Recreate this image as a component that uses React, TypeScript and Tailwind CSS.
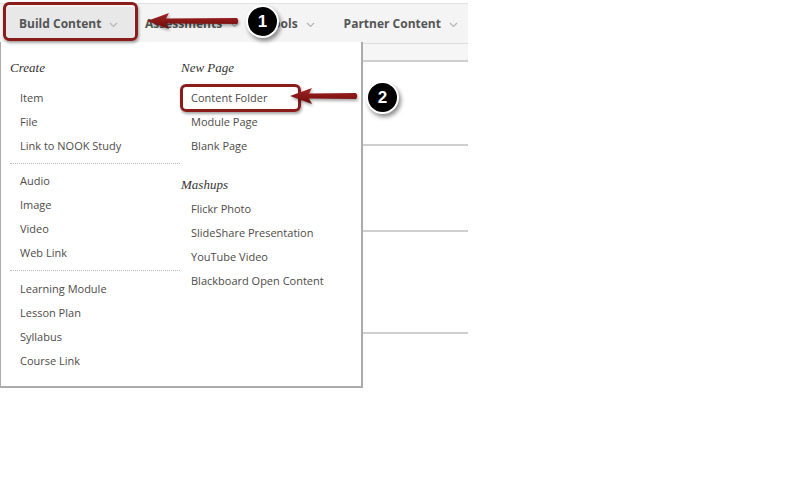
import React from 'react';

const sans = { fontFamily: '"Open Sans", "Liberation Sans", sans-serif' };

const Chevron: React.FC = () => (
  <svg width="9" height="6" viewBox="0 0 9 6" className="ml-2 mt-[2px]">
    <path d="M1 1 L4.5 4.5 L8 1" fill="none" stroke="#b5b5b5" strokeWidth="1.2" />
  </svg>
);

const Item: React.FC<{ label: string }> = ({ label }) => (
  <div className="h-6 flex items-center text-[11px] text-[#4e4b48] pl-[10px]">{label}</div>
);

const Heading: React.FC<{ label: string; className?: string }> = ({ label, className }) => (
  <div
    className={`h-5 flex items-center text-[13px] italic text-[#333] ${className ?? ''}`}
    style={{ fontFamily: '"Liberation Serif", "DejaVu Serif", serif' }}
  >
    {label}
  </div>
);

const Sep: React.FC<{ className?: string }> = ({ className }) => (
  <div className={`mt-[5px] border-t border-dotted border-[#bdbdbd] ${className ?? 'mb-[5px]'}`} />
);

const Badge: React.FC<{ n: string; className: string }> = ({ n, className }) => (
  <div
    className={`absolute w-[33px] h-[33px] rounded-full bg-black border-2 border-white flex items-center justify-center text-white text-[17px] font-bold shadow-[2px_3px_4px_rgba(0,0,0,0.45)] ${className}`}
    style={{ fontFamily: '"Liberation Sans", sans-serif' }}
  >
    {n}
  </div>
);

const Arrow: React.FC<{ className: string; len: number }> = ({ className, len }) => (
  <svg className={`absolute ${className}`} width={len + 4} height="22" viewBox={`0 0 ${len + 4} 22`}>
    <defs>
      <linearGradient id={`g${len}`} x1="0" y1="0" x2="0" y2="1">
        <stop offset="0" stopColor="#a32424" />
        <stop offset="1" stopColor="#6e0c0c" />
      </linearGradient>
    </defs>
    <g style={{ filter: 'drop-shadow(1px 2px 1.5px rgba(0,0,0,0.35))' }}>
      <path
        d={`M1 10 L23 2 L20 7.5 L${len - 2} 7 Q${len + 0.5} 10 ${len - 2} 13 L20 12.5 L23 18 Z`}
        fill={`url(#g${len})`}
      />
    </g>
  </svg>
);

const App: React.FC = () => {
  return (
    <div className="relative w-[798px] h-[485px] bg-white overflow-hidden" style={sans}>
      {/* page behind the menu */}
      <div className="w-[468px]">
        <div className="h-[3px] bg-white" />
        <div className="h-[40px] bg-[#f4f4f4] border-t border-[#e2e2e2] flex items-center text-[12px] font-bold text-[#555]">
          <div className="ml-[6px] w-[128px] h-[34px] bg-[#e8e8e8] flex items-center pl-[13px]">
            Build Content
            <Chevron />
          </div>
          <div className="ml-[11px] flex items-center">
            Assessments
            <Chevron />
          </div>
          <div className="ml-[27px] flex items-center">
            Tools
            <Chevron />
          </div>
          <div className="ml-[29px] flex items-center">
            Partner Content
            <Chevron />
          </div>
        </div>
        <div className="h-[19px] bg-[#f6f6f6] border-t border-[#dedede] border-b-2 border-b-[#cfcfcf]" />
        <div className="h-[84px] border-b-2 border-[#cfcfcf]" />
        <div className="h-[86px] border-b-2 border-[#cfcfcf]" />
        <div className="h-[102px] border-b-2 border-[#cfcfcf]" />
      </div>

      {/* dropdown menu */}
      <div className="absolute left-[-1px] top-[42px] w-[364px] h-[346px] bg-white border-2 border-[#ababab] border-t-0 flex pt-[16px]">
        <div className="ml-[9px] w-[170px] flex flex-col">
          <Heading label="Create" />
          <div className="mt-[8px]">
            <Item label="Item" />
            <Item label="File" />
            <Item label="Link to NOOK Study" />
          </div>
          <Sep />
          <Item label="Audio" />
          <Item label="Image" />
          <Item label="Video" />
          <Item label="Web Link" />
          <Sep className="mb-[6px]" />
          <Item label="Learning Module" />
          <Item label="Lesson Plan" />
          <Item label="Syllabus" />
          <Item label="Course Link" />
        </div>
        <div className="ml-[1px] flex flex-col">
          <Heading label="New Page" />
          <div className="mt-[8px]">
            <Item label="Content Folder" />
            <Item label="Module Page" />
            <Item label="Blank Page" />
          </div>
          <Heading label="Mashups" className="mt-[17px]" />
          <div className="mt-[2px]">
            <Item label="Flickr Photo" />
            <Item label="SlideShare Presentation" />
            <Item label="YouTube Video" />
            <Item label="Blackboard Open Content" />
          </div>
        </div>
      </div>

      {/* annotations */}
      <div className="absolute left-[3px] top-[2px] w-[135px] h-[39px] rounded-[6px] border-[3px] border-[#8b1c1c] shadow-[1px_2px_3px_rgba(0,0,0,0.35)]" />
      <Arrow className="left-[146px] top-[11px]" len={93} />
      <Badge n="1" className="left-[246px] top-[5px]" />

      <div className="absolute left-[180px] top-[84px] w-[121px] h-[28px] rounded-[6px] border-[3px] border-[#8b1c1c] shadow-[1px_2px_3px_rgba(0,0,0,0.35)]" />
      <Arrow className="left-[289px] top-[86px]" len={69} />
      <Badge n="2" className="left-[366px] top-[81px]" />
    </div>
  );
};

export default App;
